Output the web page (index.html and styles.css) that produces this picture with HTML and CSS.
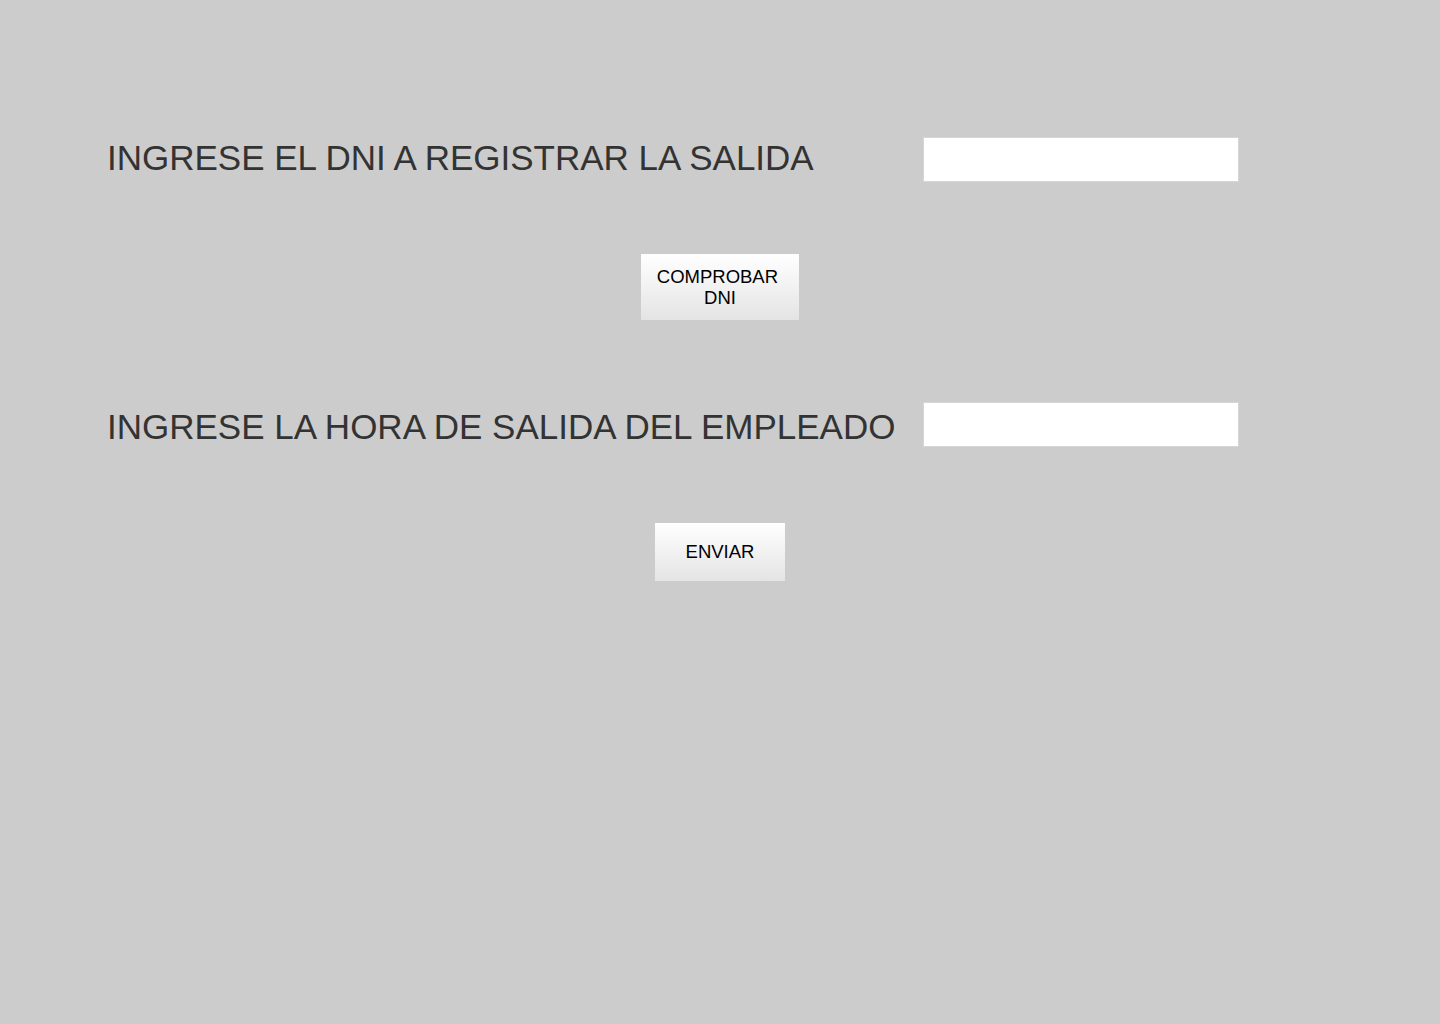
FILE: index.html
```html
<!DOCTYPE html>
<html lang="es">
<head>
<meta charset="utf-8">
<title>Registrar salida</title>
<link rel="stylesheet" href="styles.css">
</head>
<body>
<main class="page">
  <form class="form">
    <div class="row row-dni">
      <label class="label label-dni" for="dni">INGRESE EL DNI A REGISTRAR LA SALIDA</label>
      <input class="field" id="dni" type="text">
    </div>
    <div class="actions actions-check">
      <button type="button" class="btn btn-check">COMPROBAR DNI</button>
    </div>
    <div class="row row-hora">
      <label class="label label-hora" for="hora">INGRESE LA HORA DE SALIDA DEL EMPLEADO</label>
      <input class="field" id="hora" type="text">
    </div>
    <div class="actions actions-send">
      <button type="submit" class="btn btn-send">ENVIAR</button>
    </div>
  </form>
</main>
</body>
</html>
```

FILE: styles.css
```css
html, body {
  margin: 0;
  padding: 0;
  background: #cccccc;
  font-family: "Liberation Sans", Arial, sans-serif;
}

.page {
  width: 1440px;
  min-height: 1024px;
  box-sizing: border-box;
  padding-top: 137px;
}

.form {
  display: flex;
  flex-direction: column;
}

.row {
  display: grid;
  grid-template-columns: 816px 316px;
  align-items: center;
  padding-left: 107px;
  height: 45px;
}

.label {
  font-size: 35px;
  color: #333333;
  white-space: nowrap;
  line-height: 40px;
}

.label-dni {
  padding-bottom: 3px;
}

.label-hora {
  padding-top: 5px;
}

.field {
  width: 316px;
  height: 45px;
  box-sizing: border-box;
  border: 1px solid #d6d6d6;
  background: #ffffff;
  margin: 0;
  padding: 0 10px;
  font-family: inherit;
  font-size: 18px;
  outline: none;
}

.actions {
  display: flex;
  justify-content: center;
}

.actions-check {
  margin-top: 72px;
  margin-bottom: 82px;
}

.actions-send {
  margin-top: 76px;
}

.btn {
  font-family: "Liberation Sans", Arial, sans-serif;
  font-size: 18.5px;
  line-height: 21px;
  color: #000000;
  border: none;
  border-radius: 0;
  background: linear-gradient(to bottom, #ffffff 0%, #e4e4e4 100%);
  box-sizing: border-box;
  margin: 0;
  cursor: pointer;
}

.btn-check {
  width: 158px;
  height: 66px;
  padding: 0 14px;
  white-space: break-spaces;
}

.btn-send {
  width: 130px;
  height: 58px;
  padding: 0 20px 2px;
}
```
